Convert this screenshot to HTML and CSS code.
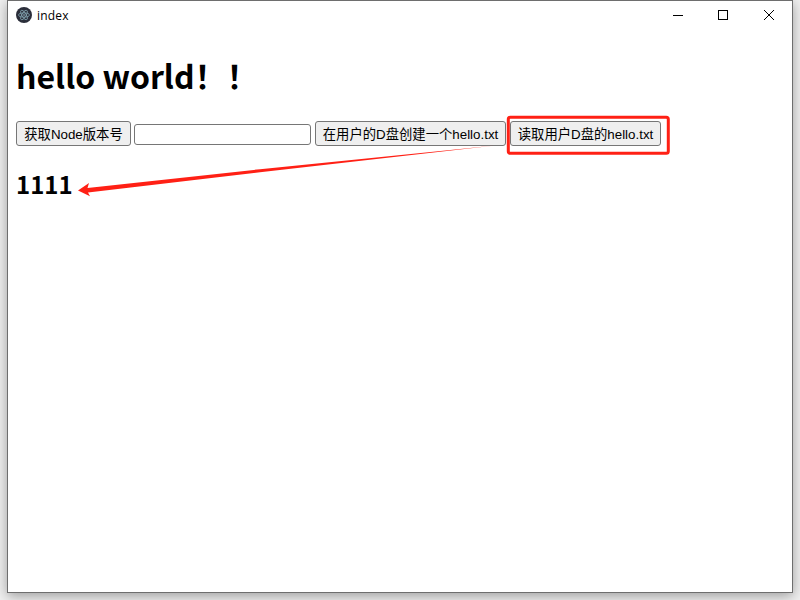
FILE: index.html
```html
<!DOCTYPE html>
<html lang="zh-CN">
<head>
<meta charset="utf-8">
<title>index</title>
<link rel="stylesheet" href="styles.css">
</head>
<body>
<div class="window">
  <header class="titlebar">
    <svg class="logo" width="16" height="16" viewBox="0 0 16 16">
      <circle cx="8" cy="8" r="8" fill="#2b2e3a"/>
      <g fill="none" stroke="#86a9b5" stroke-width=".75">
        <ellipse cx="8" cy="8" rx="5.4" ry="2.1"/>
        <ellipse cx="8" cy="8" rx="5.4" ry="2.1" transform="rotate(60 8 8)"/>
        <ellipse cx="8" cy="8" rx="5.4" ry="2.1" transform="rotate(120 8 8)"/>
      </g>
      <circle cx="8" cy="8" r=".8" fill="#9fc5d0"/>
    </svg>
    <span class="title">index</span>
    <svg class="controls" width="104" height="12" viewBox="0 0 104 12" fill="none" stroke="#000">
      <path d="M1 5.5h10M46.500 .5h9v9h-9z" shape-rendering="crispEdges"/>
      <path d="M92 0l10 10M102 0l-10 10"/>
    </svg>
  </header>
  <main class="page">
    <h1>hello world！！</h1>
    <div class="row">
      <button class="node">获取Node版本号</button>
      <input type="text">
      <button class="create">在用户的D盘创建一个hello.txt</button>
      <button class="read">读取用户D盘的hello.txt</button>
    </div>
    <h2>1111</h2>
  </main>
</div>
<svg class="annotation" width="800" height="600" viewBox="0 0 800 600">
  <rect x="508.300" y="117.300" width="160" height="36" rx="2" fill="none" stroke="#ff2015" stroke-width="3"/>
  <path d="M78 190.500L90 196.200L88 192.600L260 172.200L495 145.500L260 169.200L87.500 188L89 183Z" fill="#ff2015"/>
</svg>
</body>
</html>
```
FILE: styles.css
```css
* {
  box-sizing: border-box;
}

body {
  margin: 0;
  height: 600px;
  padding: 0 7px 7px;
  overflow: hidden;
  background: #f0f0f0;
  font-family: "Noto Sans CJK SC", sans-serif;
  color: #000;
}

.window {
  width: 786px;
  height: 593px;
  border: 1px solid #6e6e6e;
  background: #fff;
  box-shadow: 0 3px 12px rgba(0, 0, 0, .35);
}

.titlebar {
  display: flex;
  align-items: flex-start;
  height: 30px;
  padding: 6px 16px 0 8px;
}

.title {
  margin: 1px 0 0 5px;
  font: 12px/16px "Open Sans", "Noto Sans", sans-serif;
  letter-spacing: .2px;
}

.controls {
  margin: 3px 0 0 auto;
}

.page {
  padding: 0 8px;
}

h1 {
  margin: 21px 0 23px;
  font-size: 32px;
  line-height: 46px;
  font-weight: 700;
}

.row {
  display: flex;
  align-items: center;
  gap: 4px;
  height: 25px;
}

button,
input {
  flex: none;
  margin: 0;
  border: 1px solid #767676;
  border-radius: 3px;
}

button {
  height: 25px;
  padding: 2px 0 0;
  background: #efefef;
  color: #000;
  font: 13.333px/21px "Liberation Sans", "Noto Sans CJK SC", sans-serif;
  white-space: nowrap;
}

input {
  width: 177px;
  height: 21px;
  margin: 2px 0 0 -1px;
  background: #fff;
}

.node {
  width: 115px;
}

.create {
  width: 191px;
}

.read {
  width: 151px;
}

h2 {
  margin: 21px 0;
  font-size: 24px;
  line-height: 34px;
  font-weight: 700;
}

.annotation {
  position: absolute;
  top: 0;
  left: 0;
}
```
